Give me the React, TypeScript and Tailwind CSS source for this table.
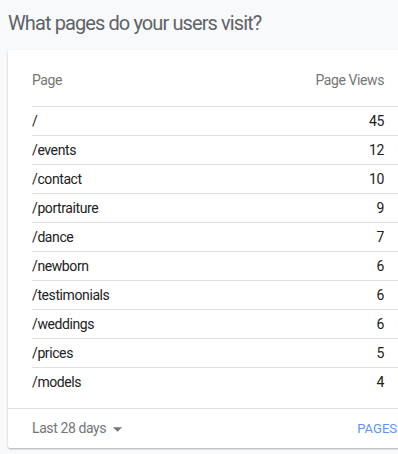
const rows: [string, number][] = [
  ["/", 45],
  ["/events", 12],
  ["/contact", 10],
  ["/portraiture", 9],
  ["/dance", 7],
  ["/newborn", 6],
  ["/testimonials", 6],
  ["/weddings", 6],
  ["/prices", 5],
  ["/models", 4],
];

export default function App() {
  return (
    <div
      className="w-[398px] h-[454px] overflow-hidden bg-[#f8f9fa]"
      style={{ fontFamily: "Roboto, 'Liberation Sans', sans-serif" }}
    >
      <h2 className="pl-2 pt-[11px] h-[50px] text-[20px] leading-[24px] tracking-[-0.9px] text-[#5f6368]">
        What pages do your users visit?
      </h2>

      <div className="ml-2 w-[400px] bg-white rounded-[2px] shadow-[0_1px_2px_rgba(0,0,0,0.3)] tracking-[-0.4px]">
        <div className="pl-6 pt-5">
          <div className="flex justify-between pr-6 pb-4 text-[14px] leading-5 text-[#757575] border-b border-[#e0e0e0]">
            <span>Page</span>
            <span>Page Views</span>
          </div>
          <div className="pb-[11px]">
            {rows.map(([page, views], i) => (
              <div
                key={page}
                className={
                  "flex items-center justify-between h-[29px] pr-6 text-[14px] text-[#212121] " +
                  (i < rows.length - 1 ? "border-b border-[#e0e0e0]" : "")
                }
              >
                <span>{page}</span>
                <span>{views}</span>
              </div>
            ))}
          </div>
        </div>

        <div className="flex items-center justify-between h-10 pl-6 pr-[11px] border-t border-[#e0e0e0]">
          <div className="flex items-center gap-[7px] text-[14px] text-[#757575]">
            <span>Last 28 days</span>
            <svg width="9" height="5" viewBox="0 0 10 5" className="mt-px">
              <path d="M0 0h10L5 5z" fill="#757575" />
            </svg>
          </div>
          <span className="text-[13px] tracking-normal text-[#5b95f5]">PAGES</span>
        </div>
      </div>
    </div>
  );
}
